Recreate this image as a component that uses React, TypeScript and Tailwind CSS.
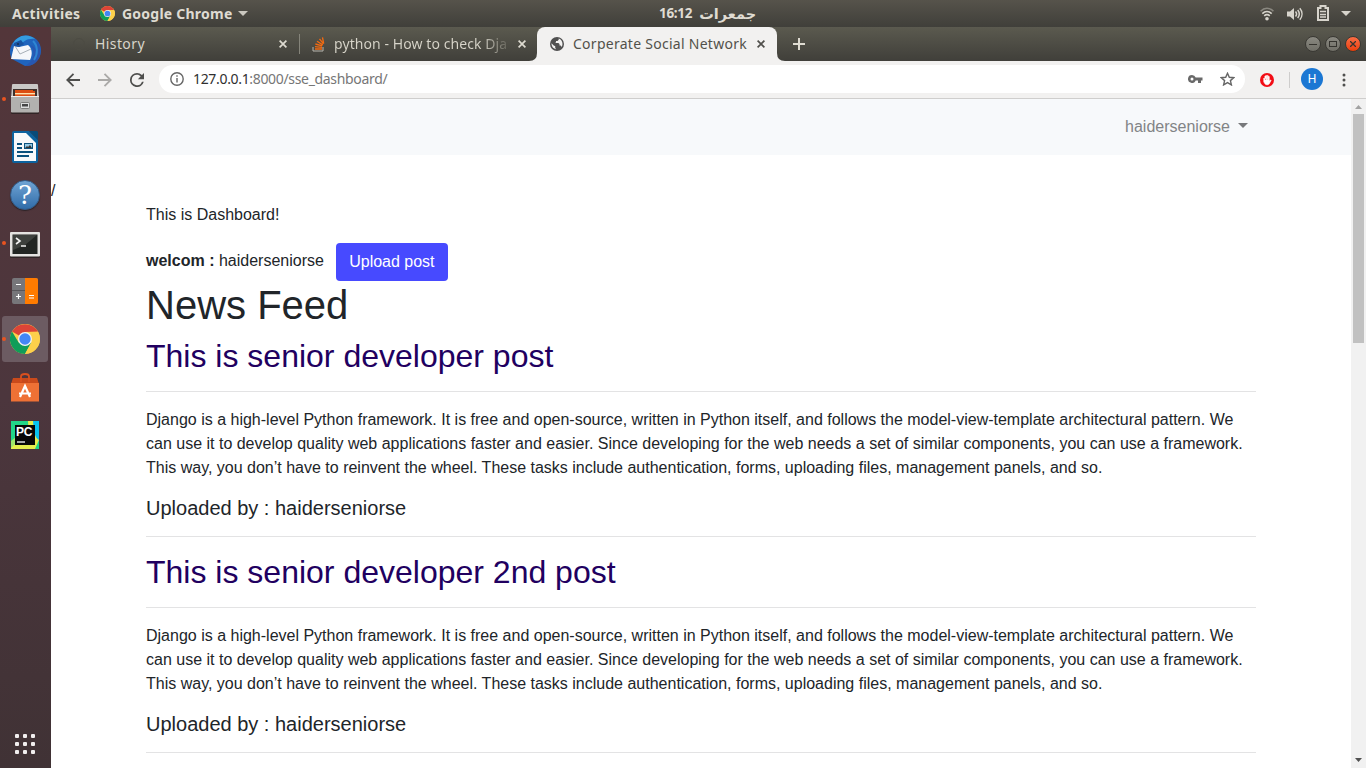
import type { ReactNode } from "react";

const DJANGO_TEXT = [
  "Django is a high-level Python framework. It is free and open-source, written in Python itself, and follows the model-view-template architectural pattern. We",
  "can use it to develop quality web applications faster and easier. Since developing for the web needs a set of similar components, you can use a framework.",
  "This way, you don’t have to reinvent the wheel. These tasks include authentication, forms, uploading files, management panels, and so.",
];

function ChromeLogo({ size }: { size: number }) {
  return (
    <svg width={size} height={size} viewBox="0 0 30 30" className="shrink-0">
      <circle cx="15" cy="15" r="15" fill="#fdd04b" />
      <path d="M15 15 2 7.5A15 15 0 0 1 28 7.8L15 8Z" fill="#dc4437" />
      <path d="M2 7.5A15 15 0 0 0 15 30L21.3 18.5 15 15 8.7 18.5Z" fill="#109d59" />
      <path d="M15 30A15 15 0 0 0 28.1 7.8L15 8 21.3 18.5Z" fill="#fdd04b" />
      <circle cx="15" cy="15" r="7" fill="#f3f3f3" />
      <circle cx="15" cy="15" r="5.7" fill="#4386f5" />
    </svg>
  );
}

function CloseX({ color }: { color: string }) {
  return (
    <svg width="8" height="8" viewBox="0 0 8 8" className="shrink-0" stroke={color} strokeWidth="1.7">
      <path d="m.6.6 6.8 6.8M7.4.6.6 7.4" />
    </svg>
  );
}

function TopBar() {
  return (
    <header className="relative flex h-[27px] shrink-0 items-center bg-linear-to-b from-[#56534b] to-[#403f3a] font-['Noto_Sans','Open_Sans',sans-serif] text-[14px] font-bold text-[#dfdbd2]">
      <span className="ml-3 w-[88px] tracking-[0.35px] whitespace-nowrap">Activities</span>
      <ChromeLogo size={15} />
      <span className="ml-[7px] w-[116px] tracking-[0.23px] whitespace-nowrap">Google Chrome</span>
      <svg width="10" height="5" viewBox="0 0 10 5" fill="#cbc8c0"><path d="M0 0h10L5 5Z" /></svg>
      <div className="absolute left-[659px] flex items-center gap-[7px] whitespace-nowrap" dir="ltr">
        <span className="text-[13.5px] tracking-[-0.3px]">16:12</span>
        <span className="font-['DejaVu_Sans',sans-serif] text-[14.5px] leading-5" lang="ur">جمعرات</span>
      </div>
      <div className="mr-[15px] ml-auto flex items-center">
        <svg width="14" height="14" viewBox="0 0 14 14" fill="none" stroke="#d7d4cc" strokeWidth="1.6">
          <path d="M.6 4.2C4.4.3 9.6.3 13.4 4.2" stroke="#8a8880" />
          <path d="M2.3 6.6c2.8-2.7 6.6-2.7 9.4 0M4.2 8.9c1.7-1.5 3.9-1.5 5.6 0" />
          <circle cx="7" cy="11.7" r="1.8" fill="#d7d4cc" stroke="none" />
        </svg>
        <svg className="ml-[13px]" width="16" height="14" viewBox="0 0 16 14" fill="none" stroke="#d7d4cc" strokeWidth="1.5">
          <path d="M0 4.5h3L7 1v12L3 9.5H0Z" fill="#d7d4cc" stroke="none" />
          <path d="M8.5 4.5c1.3 1.5 1.3 3.5 0 5M10.7 3c2 2.5 2 5.5 0 8M12.8 1.3c2.9 3.4 2.9 8 0 11.4" />
        </svg>
        <svg className="-mt-px ml-[14px]" width="12" height="16" viewBox="0 0 12 16" fill="none" stroke="#d7d4cc">
          <path d="M1 3h2.5V1h5v2H11v12H1Z" strokeWidth="2" />
          <path d="M3 6.5h6M3 9.5h6M3 12h6" strokeWidth="1.4" />
        </svg>
        <svg className="ml-3" width="10" height="5" viewBox="0 0 10 5" fill="#d7d4cc"><path d="M0 0h10L5 5Z" /></svg>
      </div>
    </header>
  );
}

function ThunderbirdIcon() {
  return (
    <svg width="32" height="32" viewBox="0 0 32 32">
      <path d="M9 3C14-1 23 0 28 5c6 7 5 16-1 22-3 3-7 4-11 4L3 24C-1 17 1 8 9 3Z" fill="#1f64bd" />
      <path d="M9 3c5-4 13-3 17 1-8-1-13 3-14 7L4 9c1-3 3-5 5-6Z" fill="#349bdf" />
      <path d="M27 5c6 6 6 15 1 21-3 4-8 5-12 5 8-4 12-14 5-21 4 1 6 4 7 7 1-5 0-9-1-12Z" fill="#2757b1" />
      <path d="M24 6c5 5 5 13 1 19" stroke="#2f86d3" strokeWidth="2" fill="none" />
      <path d="m5 11 5 1 9-2c4 3 5 9 2 15L2 24Z" fill="#f5f7fa" />
      <path d="m6 11 5 8 11-5" stroke="#a8b0b8" fill="none" />
      <path d="m5 8 7-3 3 4-5 3-5-1Z" fill="#1752a2" />
      <circle cx="9" cy="9" r="1" fill="#17314c" />
    </svg>
  );
}

function FilesIcon() {
  return (
    <svg width="28" height="30" viewBox="0 0 28 30">
      <rect y="28" width="28" height="2" rx="1" fill="#302425" />
      <path d="M1 1Q1 0 2 0h24q1 0 1 1l1 14v13H0V15Z" fill="#c9c8c6" />
      <rect x="2" y="5" width="24" height="7" fill="#3e302c" />
      <path d="M4 6h18v1h2v5H4Z" fill="#dc4e13" />
      <path d="M4 9h20v1.4H4Z" fill="#ffe2ac" />
      <rect y="12" width="28" height="16.5" rx="1" fill="#b2b1af" />
      <path d="M0 12.5h28" stroke="#eee" />
      <rect x="9.5" y="18.5" width="9" height="6" rx="1" fill="#ddd" stroke="#7d7c7a" />
      <rect x="11" y="20" width="6" height="2.5" fill="#454545" />
    </svg>
  );
}

function WriterIcon() {
  return (
    <svg width="26" height="32" viewBox="0 0 26 32">
      <path d="M2 0h15l9 9v21q0 2-2 2H2q-2 0-2-2V2Q0 0 2 0Z" fill="#0b639f" />
      <path d="M2 2h12l10 10v18H2Z" fill="#f7f9fa" />
      <path d="M17 0h8l1 1v8Z" fill="#084b79" />
      <path d="M5 13h5M5 17h5M5 21h16M5 25h12" stroke="#0b527d" strokeWidth="2" />
      <path d="M12 12h9v6h-9Z" fill="#0b527d" />
      <path d="M13 13h7v4h-7Z" fill="#93c8e4" />
      <path d="m13 17 2-2 1 1 2-2 2 3Z" fill="#333" />
    </svg>
  );
}

function HelpIcon() {
  return (
    <span className="flex size-[30px] items-center justify-center rounded-full border border-[#315c89] bg-linear-to-b from-[#6fa4d4] to-[#306ca8] shadow-[0_1px_1px_#2b2226]">
      <span className="font-['DejaVu_Serif',serif] text-[26px] leading-[28px] text-white">?</span>
    </span>
  );
}

function TerminalIcon() {
  return (
    <svg className="mt-[3px]" width="30" height="26" viewBox="0 0 30 26">
      <rect y="24" width="30" height="2" rx="1" fill="#2f2426" />
      <rect width="30" height="24.5" rx="1" fill="#e4e3e1" />
      <rect x="2.5" y="2.5" width="25" height="19.5" fill="#222523" />
      <path d="M3 3h24L15 13 3 18Z" fill="#3d403d" />
      <path d="m6 6 4 3-4 3M11 14h5" stroke="#f2f2f2" strokeWidth="1.6" fill="none" />
    </svg>
  );
}

function CalculatorIcon() {
  return (
    <svg width="26" height="26" viewBox="0 0 26 26">
      <rect width="26" height="26" rx="2" fill="#77767a" />
      <path d="M13 0h11q2 0 2 2v22q0 2-2 2H13Z" fill="#ff7b00" />
      <path d="M0 12.5h13" stroke="#58565a" />
      <path d="M4 6.5h5M4 18.5h5M6.5 16v5M17 17.5h5M17 20h5" stroke="#fff" strokeWidth="1.2" />
    </svg>
  );
}

function SoftwareIcon() {
  return (
    <svg className="mt-[2px]" width="28" height="30" viewBox="0 0 28 30">
      <path d="M2 5h24l2 6H0Z" fill="#c94a1b" />
      <path d="M0 10h28v18.5H0Z" fill="#ef7135" />
      <path d="M10 9V3.5Q10 1 14 1t4 2.5V9" stroke="#d9501f" strokeWidth="1.8" fill="none" />
      <path d="m9 24 5-11 5 11M8 20.5h12" stroke="#fff" strokeWidth="2.2" fill="none" />
    </svg>
  );
}

function PyCharmIcon() {
  return (
    <span className="relative block h-7 w-7">
      <svg width="28" height="28" viewBox="0 0 28 28">
        <path d="M0 0h28v28H0Z" fill="#21d789" />
        <path d="M17 0h6l5 18H18Z" fill="#e5ed4c" />
        <path d="M22 0h6v22l-5-10Z" fill="#07c3f2" />
        <path d="m0 24 5-6 19-2 4 3-4 9H0Z" fill="#e5ed4c" />
        <path d="m0 20 5-4v6l-5 5Z" fill="#9ee66a" />
        <path d="M4 4h20v20H4Z" fill="#080808" />
        <path d="M6 21h8" stroke="#ddd" strokeWidth="1.5" />
      </svg>
      <span className="absolute top-[5px] left-[5px] font-['Liberation_Sans',sans-serif] text-[12px] leading-[12px] font-bold tracking-[-0.3px] text-white">PC</span>
    </span>
  );
}

function DockItem({ children, running, active }: { children: ReactNode; running?: boolean; active?: boolean }) {
  return (
    <div className="relative flex h-12 w-[51px] shrink-0 items-center justify-center">
      <div className={active ? "mr-px flex h-[46px] w-[46px] items-center justify-center rounded-[3px] bg-[#6c5b62]" : "mr-px flex items-center justify-center"}>
        {children}
      </div>
      {running && <span className="absolute left-[2px] size-1 rounded-full bg-[#e95420]" />}
    </div>
  );
}

function Dock() {
  return (
    <aside className="flex w-[51px] shrink-0 flex-col bg-linear-to-b from-[#53363a] via-[#4c363d] to-[#403235]">
      <DockItem><ThunderbirdIcon /></DockItem>
      <DockItem running><FilesIcon /></DockItem>
      <DockItem><WriterIcon /></DockItem>
      <DockItem><HelpIcon /></DockItem>
      <DockItem running><TerminalIcon /></DockItem>
      <DockItem><CalculatorIcon /></DockItem>
      <DockItem running active><ChromeLogo size={30} /></DockItem>
      <DockItem><SoftwareIcon /></DockItem>
      <DockItem><PyCharmIcon /></DockItem>
      <div className="mt-auto mb-[14px] ml-[15px] grid w-5 grid-cols-3 gap-1">
        {Array.from({ length: 9 }, (_, i) => <span key={i} className="size-1 rounded-[1px] bg-[#f1eeee]" />)}
      </div>
    </aside>
  );
}

function TabStrip() {
  return (
    <div className="flex h-[34px] shrink-0 items-center bg-linear-to-b from-[#5b5a4f] to-[#403f3a] font-['Noto_Sans','Open_Sans',sans-serif] text-[14px] text-[#d8d5ca]">
      <div className="flex h-full w-[248px] items-center pl-[22px]">
        <span className="size-3 rounded-full border border-[#4c4b43]" />
        <span className="-mt-0.5 ml-[10px] w-[184px] tracking-[0.4px]">History</span>
        <CloseX color="#dedbd1" />
      </div>
      <div className="h-5 w-px bg-[#85847a]" />
      <div className="flex h-full w-[226px] items-center pl-3">
        <svg width="13" height="15" viewBox="0 0 13 15" fill="none">
          <path d="M1 10v4h10v-4" stroke="#b7b5ad" />
          <path d="M3 12h7M3 9.7l7 .7M3.4 7l6.8 1.8M5 4.2l5.8 3.7M7.5 1.8l4 5M10.5.4l1.2 6.2" stroke="#f46a10" strokeWidth="1.3" />
        </svg>
        <span className="-mt-0.5 ml-[9px] w-[177px] bg-linear-to-r from-[#d8d5ca] from-83% to-[#57564d] bg-clip-text tracking-[0.08px] whitespace-nowrap text-transparent">
          python - How to check Dja
        </span>
        <span className="ml-[7px] flex"><CloseX color="#dedbd1" /></span>
      </div>
      <div className="relative z-10 ml-[11px] flex h-full w-[240px] items-center rounded-t-[8px] bg-[#f2f1f0] pl-[13px] text-[#52514b]">
        <svg className="absolute bottom-0 -left-2" width="8" height="8"><path d="M8 0v8H0q8 0 8-8" fill="#f2f1f0" /></svg>
        <svg className="absolute -right-2 bottom-0" width="8" height="8"><path d="M0 0v8h8Q0 8 0 0" fill="#f2f1f0" /></svg>
        <svg width="14" height="14" viewBox="0 0 14 14">
          <circle cx="7" cy="7" r="7" fill="#505050" />
          <path d="M1.5 6.3 4 8.7l1.2.3v2l1 1.2c-2.6-.2-4.8-2.5-4.7-5.9ZM8.7 1.6v1.1L7.5 4H6v1.5L4.8 6h3.6L9.5 7v1.6h1.2l1 1.3c1.9-3 .3-7.2-3-8.3Z" fill="#f2f1f0" />
        </svg>
        <span className="-mt-0.5 ml-[9px] w-[184px] tracking-[0.27px] whitespace-nowrap">Corperate Social Network</span>
        <CloseX color="#504f4b" />
      </div>
      <svg className="ml-4" width="12" height="12" stroke="#dedbd1" strokeWidth="2"><path d="M6 0v12M0 6h12" /></svg>
      <div className="mr-[5px] ml-auto flex gap-1 text-[#35342f]">
        <span className="flex size-4 items-center justify-center rounded-full border border-[#3a3934] bg-linear-to-b from-[#8a8981] to-[#706f67]"><svg width="8" height="8" stroke="currentColor"><path d="M0 4.5h8" /></svg></span>
        <span className="flex size-4 items-center justify-center rounded-full border border-[#3a3934] bg-linear-to-b from-[#8a8981] to-[#706f67]"><svg width="8" height="8" stroke="currentColor" fill="none"><rect x=".5" y="1.5" width="7" height="5" /></svg></span>
        <span className="flex size-4 items-center justify-center rounded-full border border-[#3a3934] bg-linear-to-b from-[#fa6d43] to-[#e93e05]"><svg width="6" height="6" stroke="currentColor" strokeWidth="1.3"><path d="m0 0 6 6M6 0 0 6" /></svg></span>
      </div>
    </div>
  );
}

function Toolbar() {
  return (
    <div className="flex h-[38px] shrink-0 items-center border-b border-[#cfcecd] bg-[#f2f1f0] pr-[20px] pl-[15px]">
      <svg width="14" height="14" viewBox="0 0 14 14" fill="none" stroke="#4e4e4c" strokeWidth="1.8"><path d="M14 7H1.5M7.5.8 1.3 7l6.2 6.2" /></svg>
      <svg className="ml-[18px]" width="14" height="14" viewBox="0 0 14 14" fill="none" stroke="#aaa9a7" strokeWidth="1.8"><path d="M0 7h12.5M6.5.8 12.7 7l-6.2 6.2" /></svg>
      <svg className="ml-[18px]" width="14" height="14" viewBox="4 4 16 16" fill="#4e4e4c"><path d="M17.65 6.35A7.95 7.95 0 0 0 12 4a8 8 0 1 0 7.73 10h-2.08A6 6 0 1 1 12 6c1.66 0 3.14.69 4.22 1.78L13 11h7V4Z" /></svg>
      <div className="-mt-px ml-[15px] flex h-7 w-[1086px] items-center rounded-full bg-white pr-[10px] pl-[11px] font-['Noto_Sans','Open_Sans',sans-serif] text-[14px] text-[#767676]">
        <svg width="14" height="14" viewBox="0 0 14 14" fill="none" stroke="#666" strokeWidth="1.4"><circle cx="7" cy="7" r="6.2" /><path d="M7 6v4.5M7 3.2v1.5" /></svg>
        <span className="-mt-px ml-[9px] tracking-[-0.33px] whitespace-nowrap"><span className="text-[#303030]">127.0.0.1</span>:8000/sse_dashboard/</span>
        <svg className="ml-auto" width="15" height="8" viewBox="0 0 15 8" fill="#696969"><path fillRule="evenodd" d="M4 0a4 4 0 1 0 3.7 5.5H10V8h3V5.5h1.5v-3H7.7A4 4 0 0 0 4 0Zm0 2.5a1.5 1.5 0 1 1 0 3 1.5 1.5 0 0 1 0-3Z" /></svg>
        <svg className="ml-[17px]" width="15" height="14" viewBox="0 0 15 14" fill="none" stroke="#666" strokeWidth="1.4"><path d="m7.5 1.3 1.8 4 4.4.4-3.3 2.9 1 4.3-3.9-2.3-3.9 2.3 1-4.3-3.3-2.9 4.4-.4Z" /></svg>
      </div>
      <svg className="ml-[15px]" width="14" height="14" viewBox="0 0 14 14">
        <circle cx="7" cy="7" r="7" fill="#f20d15" />
        <path d="M3.8 5v3.8q1.8 4.6 5.3 2.1L11 7.5q-.1-.8-1-.2l-.8 1V3.5q-.7-.8-1.1 0v2.9M4.9 7V3.2q.7-.8 1.1 0v3.2M6.5 6.2V2.5q.6-.6 1.1 0v4" fill="#fff" stroke="#fff" strokeWidth=".7" />
      </svg>
      <div className="ml-[15px] h-4 w-px bg-[#cecdcc]" />
      <span className="-mt-px ml-[11px] flex size-[22px] items-center justify-center rounded-full bg-[#1b77d3] font-[Roboto,sans-serif] text-[12px] text-white">H</span>
      <svg className="ml-auto" width="4" height="14" fill="#50504e"><circle cx="2" cy="2" r="1.5" /><circle cx="2" cy="7" r="1.5" /><circle cx="2" cy="12" r="1.5" /></svg>
    </div>
  );
}

function Post({ title }: { title: string }) {
  return (
    <article>
      <h2 className="text-[32px] leading-[38px] text-[#210060]">{title}</h2>
      <hr className="my-4 border-[#e3e3e4]" />
      <p className="text-base leading-6 whitespace-nowrap">
        {DJANGO_TEXT.map((line) => <span key={line} className="block">{line}</span>)}
      </p>
      <h5 className="mt-4 text-xl leading-6">Uploaded by : haiderseniorse</h5>
      <hr className="my-4 border-[#e3e3e4]" />
    </article>
  );
}

function Dashboard() {
  return (
    <main className="min-w-0 flex-1 overflow-hidden bg-white">
      <nav className="flex h-14 items-center justify-end bg-[#f7f9fb] pr-[103px] text-base text-[#828486]">
        haiderseniorse
        <svg className="-mt-[3px] ml-2" width="10" height="5" viewBox="0 0 10 5" fill="#77797b"><path d="M0 0h10L5 5Z" /></svg>
      </nav>
      <div className="mt-6 h-6 leading-6">/</div>
      <div className="ml-[95px] w-[1110px]">
        <p className="leading-6">This is Dashboard!</p>
        <div className="mt-4 flex h-[38px] items-center">
          <span className="-mt-[3px] leading-6"><b>welcom :</b> haiderseniorse</span>
          <button className="ml-3 h-[38px] w-28 rounded-[4px] bg-[#474aff] text-base text-white">Upload post</button>
        </div>
        <h1 className="mb-2 text-[40px] leading-[48px]">News Feed</h1>
        <Post title="This is senior developer post" />
        <Post title="This is senior developer 2nd post" />
      </div>
    </main>
  );
}

function Scrollbar() {
  return (
    <div className="flex w-[15px] shrink-0 flex-col items-center bg-[#f1f1f1]">
      <svg className="mt-[6px]" width="7" height="4" fill="#a2a2a2"><path d="M0 4h7L3.5 0Z" /></svg>
      <div className="mt-[5px] h-[229px] w-[11px] bg-[#c1c1c1]" />
      <svg className="mt-auto mb-[6px]" width="7" height="4" fill="#505050"><path d="M0 0h7L3.5 4Z" /></svg>
    </div>
  );
}

export default function App() {
  return (
    <div className="flex h-[768px] w-[1366px] flex-col overflow-hidden font-['Liberation_Sans',Arial,sans-serif] text-base text-[#212529]">
      <TopBar />
      <div className="flex min-h-0 flex-1">
        <Dock />
        <div className="flex min-w-0 flex-1 flex-col">
          <TabStrip />
          <Toolbar />
          <div className="flex min-h-0 flex-1">
            <Dashboard />
            <Scrollbar />
          </div>
        </div>
      </div>
    </div>
  );
}
